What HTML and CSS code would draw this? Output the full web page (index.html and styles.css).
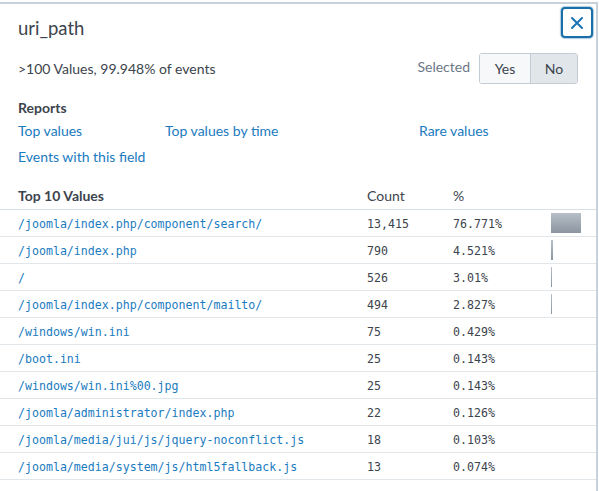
FILE: index.html
```html
<!DOCTYPE html>
<html>
<head>
<meta charset="utf-8">
<link rel="stylesheet" href="styles.css">
</head>
<body>
<div class="panel">
  <div class="head">
    <h1 class="title">uri_path</h1>
    <button class="close" aria-label="Close">
      <svg width="14" height="14" viewBox="0 0 14 14"><path d="M2 2 L12 12 M12 2 L2 12" stroke="#1a73b3" stroke-width="2" stroke-linecap="round" fill="none"/></svg>
    </button>
  </div>
  <div class="summary">
    <span class="stat">&gt;100 Values, 99.948% of events</span>
    <span class="sel-label">Selected</span>
    <div class="toggle">
      <span class="opt">Yes</span>
      <span class="opt on">No</span>
    </div>
  </div>
  <div class="reports">
    <div class="sec">Reports</div>
    <div class="links">
      <a class="lnk">Top values</a>
      <a class="lnk">Top values by time</a>
      <a class="lnk">Rare values</a>
      <a class="lnk">Events with this field</a>
    </div>
  </div>
  <table class="vals">
    <colgroup><col class="c1"><col class="c2"><col class="c3"><col class="c4"></colgroup>
    <thead>
      <tr><th>Top 10 Values</th><th class="n">Count</th><th class="n">%</th><th></th></tr>
    </thead>
    <tbody>
      <tr><td class="v">/joomla/index.php/component/search/</td><td class="m">13,415</td><td class="m">76.771%</td><td><div class="bar" style="width:30px"></div></td></tr>
      <tr><td class="v">/joomla/index.php</td><td class="m">790</td><td class="m">4.521%</td><td><div class="bar" style="width:2px"></div></td></tr>
      <tr><td class="v">/</td><td class="m">526</td><td class="m">3.01%</td><td><div class="bar" style="width:1px"></div></td></tr>
      <tr><td class="v">/joomla/index.php/component/mailto/</td><td class="m">494</td><td class="m">2.827%</td><td><div class="bar" style="width:1px"></div></td></tr>
      <tr><td class="v">/windows/win.ini</td><td class="m">75</td><td class="m">0.429%</td><td></td></tr>
      <tr><td class="v">/boot.ini</td><td class="m">25</td><td class="m">0.143%</td><td></td></tr>
      <tr><td class="v">/windows/win.ini%00.jpg</td><td class="m">25</td><td class="m">0.143%</td><td></td></tr>
      <tr><td class="v">/joomla/administrator/index.php</td><td class="m">22</td><td class="m">0.126%</td><td></td></tr>
      <tr><td class="v">/joomla/media/jui/js/jquery-noconflict.js</td><td class="m">18</td><td class="m">0.103%</td><td></td></tr>
      <tr><td class="v">/joomla/media/system/js/html5fallback.js</td><td class="m">13</td><td class="m">0.074%</td><td></td></tr>
    </tbody>
  </table>
</div>
</body>
</html>
```
FILE: styles.css
```css
html, body {
  margin: 0;
  padding: 0;
  background: #ffffff;
}
body {
  font-family: Lato, "Open Sans", sans-serif;
  font-size: 14px;
  color: #3c444d;
}
.panel {
  margin-top: 2px;
  width: 596px;
  height: 487px;
  border-top: 2px solid #c8d0da;
  border-right: 2px solid #c8d0da;
  box-sizing: content-box;
  overflow: hidden;
}
.head {
  display: flex;
  justify-content: space-between;
  align-items: flex-start;
  padding: 0 3px 0 18px;
}
.title {
  margin: 12px 0 0 0;
  font-size: 18.5px;
  line-height: 24px;
  font-weight: 400;
  color: #3c444d;
}
.close {
  margin-top: 3px;
  width: 32px;
  height: 31px;
  padding: 0;
  border: 2px solid #1b6fa8;
  border-radius: 4px;
  background: #fff;
  box-shadow: 0 0 1px 1px rgba(27, 111, 168, 0.35);
  display: flex;
  align-items: center;
  justify-content: center;
}
.summary {
  display: flex;
  align-items: center;
  margin-top: 13px;
  padding: 0 18px;
  height: 31px;
}
.stat {
  flex: 1;
  line-height: 18px;
}
.sel-label {
  color: #6b7785;
  margin-right: 9px;
  margin-top: -4px;
}
.toggle {
  display: flex;
  height: 31px;
  border: 1px solid #c3cbd4;
  border-radius: 3px;
  box-sizing: border-box;
  overflow: hidden;
}
.opt {
  display: flex;
  align-items: center;
  justify-content: center;
  font-size: 14px;
  color: #3c444d;
}
.opt:first-child {
  width: 50px;
  background: #f7f8fa;
  border-right: 1px solid #c3cbd4;
}
.opt.on {
  width: 46px;
  background: #e1e6eb;
}
.reports {
  padding: 0 18px;
  margin-top: 15px;
}
.sec {
  font-weight: 700;
  line-height: 18px;
  margin-bottom: 5px;
}
.links {
  display: grid;
  grid-template-columns: 147px 254px auto;
  row-gap: 8px;
}
.lnk {
  color: #1a7bbf;
  line-height: 18px;
}
.vals {
  margin-top: 17px;
  width: 596px;
  border-collapse: collapse;
  table-layout: fixed;
}
.c1 { width: 367px; }
.c2 { width: 86px; }
.c3 { width: 98px; }
.c4 { width: 45px; }
.vals th {
  text-align: left;
  font-weight: 700;
  height: 26px;
  padding: 0;
  border-bottom: 1px solid #d8dee5;
  line-height: 18px;
}
.vals th:first-child {
  padding-left: 18px;
}
.vals th.n {
  font-weight: 400;
}
.vals td {
  height: 26px;
  padding: 0;
  border-bottom: 1px solid #e1e6eb;
  vertical-align: middle;
  line-height: 16px;
}
.vals td.v,
.vals td.m {
  height: 24px;
  padding-top: 2px;
  font-family: "DejaVu Sans Mono", monospace;
  font-size: 11.6px;
}
.vals td.v {
  padding-left: 18px;
  color: #1a7bbf;
  white-space: nowrap;
}
.vals td.m {
  color: #3c444d;
}
.bar {
  height: 20px;
  background: linear-gradient(#b7bec7, #8b95a0);
}
```
